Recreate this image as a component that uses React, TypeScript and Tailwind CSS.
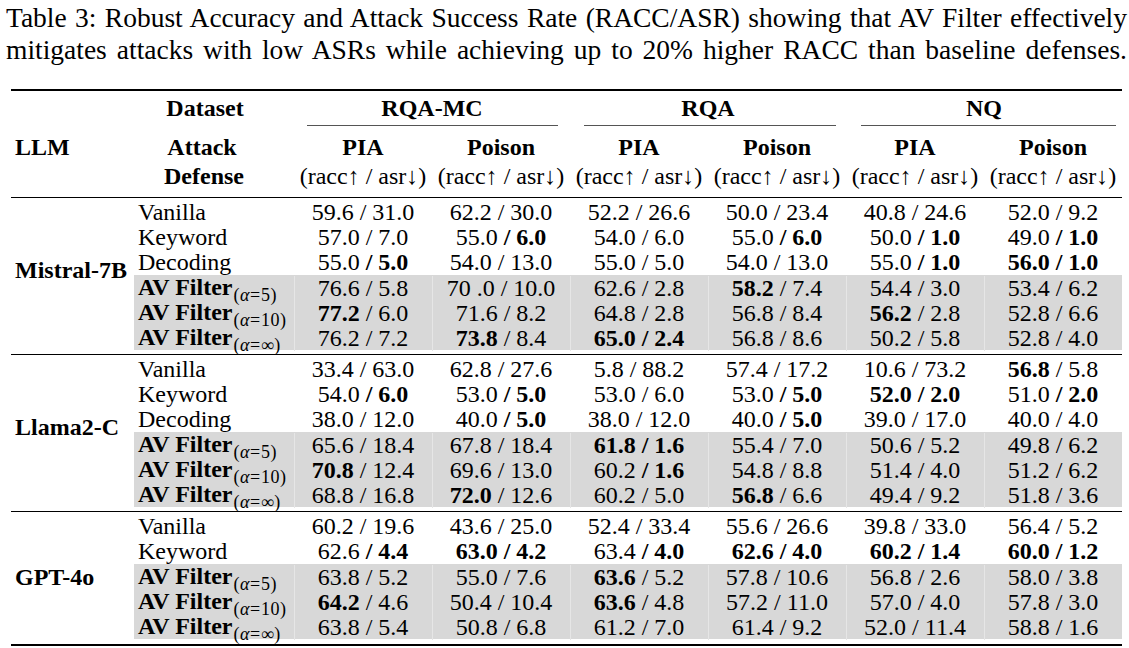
import React from 'react';

type Row = { def: string; alpha?: string; cells: string[] };
type Block = { llm: string; rows: Row[]; last?: boolean };

const blocks: Block[] = [
  {
    llm: 'Mistral-7B',
    rows: [
      { def: 'Vanilla', cells: ['59.6 / 31.0', '62.2 / 30.0', '52.2 / 26.6', '50.0 / 23.4', '40.8 / 24.6', '52.0 / 9.2'] },
      { def: 'Keyword', cells: ['57.0 / 7.0', '55.0 **/ 6.0**', '54.0 / 6.0', '55.0 **/ 6.0**', '50.0 **/ 1.0**', '49.0 **/ 1.0**'] },
      { def: 'Decoding', cells: ['55.0 **/ 5.0**', '54.0 / 13.0', '55.0 / 5.0', '54.0 / 13.0', '55.0 **/ 1.0**', '**56.0 / 1.0**'] },
      { def: 'AV Filter', alpha: '5', cells: ['76.6 / 5.8', '70 .0 / 10.0', '62.6 / 2.8', '**58.2** / 7.4', '54.4 / 3.0', '53.4 / 6.2'] },
      { def: 'AV Filter', alpha: '10', cells: ['**77.2** / 6.0', '71.6 / 8.2', '64.8 / 2.8', '56.8 / 8.4', '**56.2** / 2.8', '52.8 / 6.6'] },
      { def: 'AV Filter', alpha: '∞', cells: ['76.2 / 7.2', '**73.8** / 8.4', '**65.0 / 2.4**', '56.8 / 8.6', '50.2 / 5.8', '52.8 / 4.0'] },
    ],
  },
  {
    llm: 'Llama2-C',
    rows: [
      { def: 'Vanilla', cells: ['33.4 / 63.0', '62.8 / 27.6', '5.8 / 88.2', '57.4 / 17.2', '10.6 / 73.2', '**56.8** / 5.8'] },
      { def: 'Keyword', cells: ['54.0 **/ 6.0**', '53.0 **/ 5.0**', '53.0 / 6.0', '53.0 **/ 5.0**', '**52.0 / 2.0**', '51.0 **/ 2.0**'] },
      { def: 'Decoding', cells: ['38.0 / 12.0', '40.0 **/ 5.0**', '38.0 / 12.0', '40.0 **/ 5.0**', '39.0 / 17.0', '40.0 / 4.0'] },
      { def: 'AV Filter', alpha: '5', cells: ['65.6 / 18.4', '67.8 / 18.4', '**61.8 / 1.6**', '55.4 / 7.0', '50.6 / 5.2', '49.8 / 6.2'] },
      { def: 'AV Filter', alpha: '10', cells: ['**70.8** / 12.4', '69.6 / 13.0', '60.2 **/ 1.6**', '54.8 / 8.8', '51.4 / 4.0', '51.2 / 6.2'] },
      { def: 'AV Filter', alpha: '∞', cells: ['68.8 / 16.8', '**72.0** / 12.6', '60.2 / 5.0', '**56.8** / 6.6', '49.4 / 9.2', '51.8 / 3.6'] },
    ],
  },
  {
    llm: 'GPT-4o',
    last: true,
    rows: [
      { def: 'Vanilla', cells: ['60.2 / 19.6', '43.6 / 25.0', '52.4 / 33.4', '55.6 / 26.6', '39.8 / 33.0', '56.4 / 5.2'] },
      { def: 'Keyword', cells: ['62.6 **/ 4.4**', '**63.0 / 4.2**', '63.4 **/ 4.0**', '**62.6 / 4.0**', '**60.2 / 1.4**', '**60.0 / 1.2**'] },
      { def: 'AV Filter', alpha: '5', cells: ['63.8 / 5.2', '55.0 / 7.6', '**63.6** / 5.2', '57.8 / 10.6', '56.8 / 2.6', '58.0 / 3.8'] },
      { def: 'AV Filter', alpha: '10', cells: ['**64.2** / 4.6', '50.4 / 10.4', '**63.6** / 4.8', '57.2 / 11.0', '57.0 / 4.0', '57.8 / 3.0'] },
      { def: 'AV Filter', alpha: '∞', cells: ['63.8 / 5.4', '50.8 / 6.8', '61.2 / 7.0', '61.4 / 9.2', '52.0 / 11.4', '58.8 / 1.6'] },
    ],
  },
];

const Value = ({ text }: { text: string }) => (
  <>
    {text.split('**').map((p, i) =>
      i % 2 ? <b key={i}>{p}</b> : <span key={i}>{p}</span>
    )}
  </>
);

const Defense = ({ row }: { row: Row }) =>
  row.alpha ? (
    <span className="font-bold">
      AV Filter
      <span className="relative top-[6px] ml-[1px] text-[18px] font-normal tracking-[0.6px]">
        (<i>α</i>={row.alpha})
      </span>
    </span>
  ) : (
    <span>{row.def}</span>
  );

const racc = '(racc↑ / asr↓)';

export default function App() {
  return (
    <div className="w-[1129px] h-[648px] overflow-hidden bg-white text-black font-['Liberation_Serif',serif]">
      {/* caption */}
      <div className="pl-[6px] pr-[2px] pt-[2px] text-[27.5px] leading-[32px]">
        <div className="text-justify [text-align-last:justify]">
          Table 3: Robust Accuracy and Attack Success Rate (RACC/ASR) showing that AV Filter effectively
        </div>
        <div className="text-justify [text-align-last:justify]">
          mitigates attacks with low ASRs while achieving up to 20% higher RACC than baseline defenses.
        </div>
      </div>

      <div className="ml-[11px] mt-[23px] w-[1111px] text-[24px]">
        <div className="h-[2px] bg-black" />

        {/* header */}
        <div className="grid h-[34px] grid-cols-[123px_160px_repeat(6,138px)] items-center font-bold leading-[34px]">
          <div />
          <div className="pr-[18px] text-center">Dataset</div>
          <div className="col-span-2 text-center">RQA-MC</div>
          <div className="col-span-2 text-center">RQA</div>
          <div className="col-span-2 text-center">NQ</div>
        </div>
        <div className="grid h-px grid-cols-[123px_160px_repeat(6,138px)]">
          <div className="col-start-3 col-span-2 ml-[13px] mr-[12px] bg-[#555]" />
          <div className="col-span-2 ml-[14px] mr-[10px] bg-[#555]" />
          <div className="col-span-2 ml-[15px] mr-[6px] bg-[#555]" />
        </div>
        <div className="pt-[7px] pb-[6px]">
          <div className="grid h-[29px] grid-cols-[123px_160px_repeat(6,138px)] items-center font-bold leading-[29px]">
            <div className="pl-[4px]">LLM</div>
            <div className="pr-[24px] text-center">Attack</div>
            <div className="text-center">PIA</div>
            <div className="text-center">Poison</div>
            <div className="text-center">PIA</div>
            <div className="text-center">Poison</div>
            <div className="text-center">PIA</div>
            <div className="text-center">Poison</div>
          </div>
          <div className="grid h-[29px] grid-cols-[123px_160px_repeat(6,138px)] items-center whitespace-nowrap leading-[29px]">
            <div />
            <div className="pr-[20px] text-center font-bold">Defense</div>
            {[0, 1, 2, 3, 4, 5].map((i) => (
              <div key={i} className="text-center">{racc}</div>
            ))}
          </div>
        </div>
        <div className="h-px bg-black" />

        {/* body */}
        {blocks.map((b) => (
          <div key={b.llm}>
            <div className={b.last ? 'flex pt-[2px] pb-[5px]' : 'flex pt-[2px] pb-[4px]'}>
              <div
                className={
                  b.last
                    ? 'flex w-[123px] items-center pl-[4px] font-bold'
                    : 'flex w-[123px] items-center pl-[4px] pb-[10px] font-bold'
                }
              >
                {b.llm}
              </div>
              <div>
                {b.rows.map((r, ri) => (
                  <div
                    key={ri}
                    className={
                      r.alpha
                        ? 'grid h-[25px] grid-cols-[160px_repeat(6,138px)] items-center whitespace-nowrap bg-[#d8d8d8] leading-[25px]'
                        : 'grid h-[25px] grid-cols-[160px_repeat(6,138px)] items-center whitespace-nowrap leading-[25px]'
                    }
                  >
                    <div className="pl-[4px]">
                      <Defense row={r} />
                    </div>
                    {r.cells.map((c, ci) => (
                      <div
                        key={ci}
                        className={r.alpha ? 'text-center shadow-[inset_1px_0_0_#e6e6e6]' : 'text-center'}
                      >
                        <Value text={c} />
                      </div>
                    ))}
                  </div>
                ))}
              </div>
            </div>
            <div className={b.last ? 'h-[2px] bg-black' : 'h-px bg-black'} />
          </div>
        ))}
      </div>
    </div>
  );
}
